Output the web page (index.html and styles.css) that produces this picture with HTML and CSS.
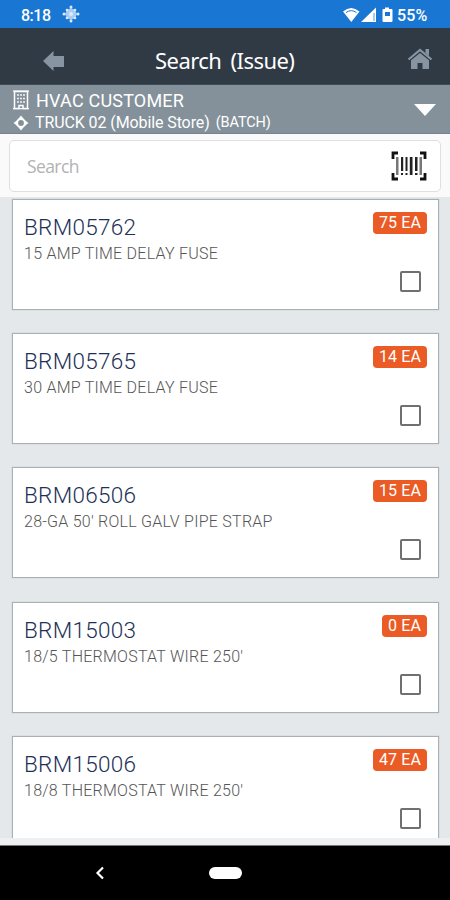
FILE: index.html
```
<!DOCTYPE html>
<html lang="en">
<head>
<meta charset="utf-8">
<title>Search (Issue)</title>
<link rel="stylesheet" href="styles.css">
</head>
<body>
<div class="app">
  <div class="status">
    <span class="clock">8:18</span>
    <svg class="spark" width="18" height="18" viewBox="0 0 18 18" fill="#d9eafd"><path d="M9 3l4 2 2 4-2 4-4 2-4-2-2-4 2-4z" opacity=".75"/><circle cx="9" cy="2" r="1.5"/><circle cx="9" cy="16" r="1.5"/><circle cx="2" cy="9" r="1.5"/><circle cx="16" cy="9" r="1.5"/><circle cx="5" cy="5" r="1.3"/><circle cx="13" cy="5" r="1.3"/><circle cx="5" cy="13" r="1.3"/><circle cx="13" cy="13" r="1.3"/><circle cx="9" cy="9" r="2"/></svg>
    <svg class="signals" width="52" height="18" viewBox="0 0 52 18"><path d="M0 5.500Q8 -1.500 16.500 5.500L8.300 16z" fill="#fff"/><path d="M3 6.500Q8.300 2.800 13.500 6.500" stroke="#1976d2" stroke-width="1" fill="none"/><path d="M18 16L33 1.500V16z" fill="#fff"/><path d="M31 7v8" stroke="#a9cdf2" stroke-width="2"/><path d="M42 1.500h4v1.500h2.500q1 0 1 1v11q0 1-1 1h-8q-1 0-1-1V4q0-1 1-1H42z" fill="#fff"/><path d="M42 6h5v4h-5z" fill="#1976d2"/></svg>
    <span class="percent">55%</span>
  </div>
  <header class="header">
    <svg class="back" width="22" height="20" viewBox="0 0 22 20"><path d="M0 10L10.500 0v5H21v11H10.500v4z" fill="#8795a2"/></svg>
    <h1>Search (Issue)</h1>
    <svg class="home" width="26" height="22" viewBox="0 0 26 22"><path d="M1.500 11.500L13 2l11.500 9.500" fill="none" stroke="#8795a2" stroke-width="2.200"/><path d="M18.500 1H22v7l-3.500-3z M4 12.200L13 5l9 7.200V21h-6.500v-6h-5v6H4z" fill="#8795a2"/></svg>
  </header>
  <section class="context">
    <div class="line">
      <svg width="16" height="20" viewBox="0 0 16 20"><path d="M1.500 1.500h13v17H10v-3H6v3H1.500z" fill="none" stroke="#fff" stroke-width="1.500"/><path d="M0 18.700h16M0 1.200h16" stroke="#fff" stroke-width="1.300"/><path d="M4 5h8M4 8.500h8M4 12h8" stroke="#f1f4f5" stroke-width="1.700" stroke-dasharray="2 1"/></svg>
      <span class="customer">HVAC CUSTOMER</span>
    </div>
    <div class="line">
      <svg width="16" height="16" viewBox="0 0 16 16"><path d="M8 .5L11 4.300H5z M8 15.500l3-3.800H5z M.5 8L4.500 5v6z M15.500 8l-4-3v6z" fill="#fff"/><circle cx="8" cy="8" r="4" fill="none" stroke="#fff" stroke-width="2.200"/></svg>
      <span class="truck">TRUCK 02 (Mobile Store)</span><span class="batch">(BATCH)</span>
    </div>
    <svg class="caret" width="22" height="12" viewBox="0 0 22 12"><path d="M0 0h22L11 12z" fill="#fff"/></svg>
  </section>
  <div class="search">
    <div class="field">
      <span class="placeholder">Search</span>
      <svg width="36" height="30" viewBox="0 0 36 30"><path d="M2 8V2h5M29 2h5v6M34 22v6h-5M7 28H2v-6" fill="none" stroke="#111" stroke-width="2.800"/><path d="M5 6h2.500v18H5zM28.500 6H31v18h-2.500z" fill="#777"/><g fill="#222"><path d="M10 6h2.200v14H10zM14.500 6h2v14h-2zM18.800 6h2.700v18h-2.700zM24 6h2.500v14H24z"/><path d="M10 22h2v2h-2zM14.500 22h2v2h-2zM24 22h2.500v2H24z"/></g></svg>
    </div>
  </div>
  <main class="list">
    <article class="card"><div class="info"><h2>BRM05762</h2><p>15 AMP TIME DELAY FUSE</p></div><div class="side"><span class="badge">75 EA</span><span class="check"></span></div></article>
    <article class="card"><div class="info"><h2>BRM05765</h2><p>30 AMP TIME DELAY FUSE</p></div><div class="side"><span class="badge">14 EA</span><span class="check"></span></div></article>
    <article class="card"><div class="info"><h2>BRM06506</h2><p>28-GA 50' ROLL GALV PIPE STRAP</p></div><div class="side"><span class="badge">15 EA</span><span class="check"></span></div></article>
    <article class="card"><div class="info"><h2>BRM15003</h2><p>18/5 THERMOSTAT WIRE 250'</p></div><div class="side"><span class="badge">0 EA</span><span class="check"></span></div></article>
    <article class="card"><div class="info"><h2>BRM15006</h2><p>18/8 THERMOSTAT WIRE 250'</p></div><div class="side"><span class="badge">47 EA</span><span class="check"></span></div></article>
  </main>
  <div class="strip"></div>
  <nav class="nav">
    <svg width="10" height="14" viewBox="0 0 10 14"><path d="M8 1.500L2.500 7 8 12.500" fill="none" stroke="#fff" stroke-width="2.200"/></svg>
    <span class="pill"></span>
  </nav>
</div>
</body>
</html>
```
FILE: styles.css
```
* { box-sizing: border-box; }
body { margin: 0; font-family: Roboto, sans-serif; }
h1, h2, p { margin: 0; }
svg { display: block; flex: none; }
span { white-space: nowrap; }
.app { width: 450px; height: 900px; display: flex; flex-direction: column; overflow: hidden; background: #e4e8eb; }
.app > * { flex: none; }
.status { height: 28px; background: #1976d2; color: #fff; display: flex; align-items: center; padding: 2px 20px 0 21px; font-size: 16px; font-weight: 500; }
.clock { width: 30px; letter-spacing: -.5px; }
.spark { margin-left: 11px; margin-top: -2px; }
.signals { margin-left: auto; }
.percent { margin-left: 2px; width: 33px; letter-spacing: .2px; }
.header { height: 57px; background: #303a45; border-bottom: 1px solid #3f4b57; display: flex; align-items: center; padding: 7px 17px 0 43px; }
.back { margin-top: 2px; }
.header h1 { margin-left: 90px; font: 400 22px/30px "Noto Sans", sans-serif; color: #fff; word-spacing: 4px; letter-spacing: -.55px; white-space: nowrap; }
.home { margin-left: auto; margin-top: -2px; }
.context { height: 49px; background: #84919a; border-bottom: 1px solid #73838f; color: #fff; position: relative; padding: 4px 13px 0; }
.line { display: flex; align-items: center; height: 22px; gap: 7px; }
.line + .line { height: 23px; gap: 6px; }
.customer { font-size: 18px; letter-spacing: .2px; }
.truck { font-size: 16px; letter-spacing: -.1px; }
.batch { font-size: 14.5px; letter-spacing: -.1px; }
.caret { position: absolute; right: 14px; top: 19px; }
.search { height: 63px; background: #fafafb; padding: 6px 9px; }
.field { height: 52px; background: #fff; border: 1px solid #dedfe1; border-radius: 5px; display: flex; align-items: center; justify-content: space-between; padding: 0 13px 0 17px; }
.placeholder { font: 400 17.5px "Open Sans", sans-serif; letter-spacing: -.6px; color: #b2b2b2; }
.list { height: 641px; overflow: hidden; padding: 2px 11px 0 12px; display: flex; flex-direction: column; gap: 23.2px; }
.card { flex: none; height: 111px; background: #fff; border: 1px solid #a9b1b6; box-shadow: 0 0 1px #a9b1b6; display: flex; justify-content: space-between; padding: 12px 11px 0; }
.info h2 { margin-top: -1px; font-size: 22.5px; line-height: 32px; font-weight: 300; letter-spacing: .3px; color: #1d3158; }
.info p { margin-top: 1px; font-size: 16px; line-height: 20px; font-weight: 300; letter-spacing: .25px; color: #555; white-space: nowrap; }
.side { display: flex; flex-direction: column; align-items: flex-end; }
.badge { background: #ea5b25; color: #fff; height: 22px; line-height: 22px; border-radius: 4px; padding: 0 6px; font-size: 16px; letter-spacing: .1px; }
.check { width: 21px; height: 21px; border: 2px solid #707070; border-radius: 2px; margin: 37px 6px 0 0; }
.strip { height: 8px; background: #eeeff0; border-bottom: 1px solid #777; }
.nav { height: 54px; background: #000; display: flex; align-items: center; padding-left: 95px; gap: 104px; }
.pill { width: 33px; height: 12px; border-radius: 6px; background: #fff; }
```
